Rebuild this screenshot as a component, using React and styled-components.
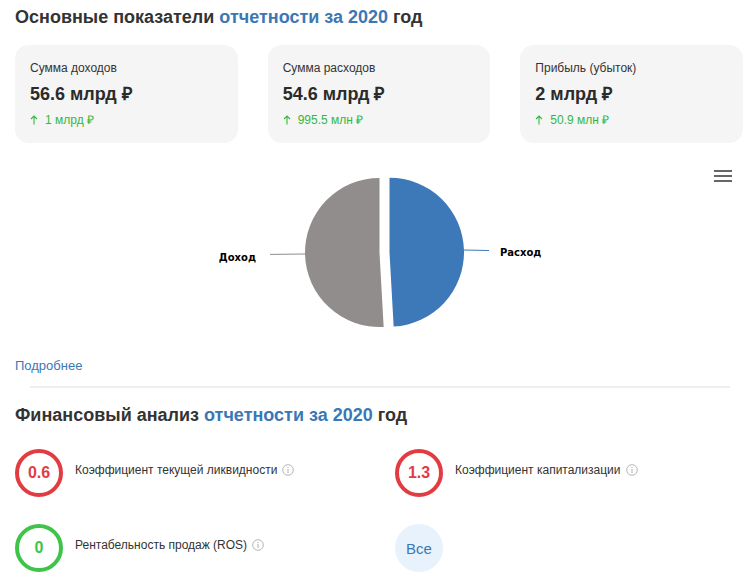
import React from "react";
import styled, { createGlobalStyle } from "styled-components";

const Global = createGlobalStyle`
  html, body { margin: 0; padding: 0; background: #fff; }
  body { font-family: "Liberation Sans", Arial, sans-serif; color: #333; }
`;

const Page = styled.div`
  padding: 6px 13px 0 15px;
  width: 728px;
`;

const Title = styled.h2`
  margin: ${(p) => p.$mt || 0}px 0 0;
  font-size: 18px;
  line-height: 22px;
  font-weight: 700;
  color: #333;
`;

const Accent = styled.span`
  color: #3a78b5;
`;

const Cards = styled.div`
  margin-top: 17px;
  display: grid;
  grid-template-columns: repeat(3, 1fr);
  column-gap: 30px;
`;

const Card = styled.div`
  background: #f5f5f5;
  border-radius: 14px;
  height: 98px;
  box-sizing: border-box;
  padding: 16px 15px 0;
  display: flex;
  flex-direction: column;
  gap: 7px;
`;

const CardLabel = styled.div`
  font-size: 12px;
  line-height: 14px;
  color: #333;
`;

const CardValue = styled.div`
  font-size: 18px;
  line-height: 24px;
  font-weight: 700;
  color: #2b2b2b;
`;

const CardChange = styled.div`
  font-size: 12px;
  line-height: 14px;
  color: #33b83f;
  display: flex;
  align-items: center;
  gap: 7px;
`;

const ChartBox = styled.div`
  position: relative;
  margin-top: 10px;
  height: 193px;
`;

const MenuButton = styled.button`
  position: absolute;
  top: 12px;
  right: 8px;
  width: 24px;
  height: 22px;
  padding: 0;
  border: 0;
  background: transparent;
  display: flex;
  align-items: center;
  justify-content: center;
  cursor: pointer;
`;

const MoreLink = styled.a`
  display: block;
  margin-top: 12px;
  font-size: 13px;
  line-height: 16px;
  color: #3a78b5;
  text-decoration: none;
`;

const Divider = styled.hr`
  margin: 12px 13px 0 15px;
  border: 0;
  height: 2px;
  background: #efefef;
`;

const Metrics = styled.div`
  margin-top: 23px;
  display: grid;
  grid-template-columns: 380px 1fr;
  row-gap: 27px;
`;

const Metric = styled.div`
  display: flex;
  align-items: center;
  gap: 12px;
`;

const Ring = styled.div`
  width: 48px;
  height: 48px;
  box-sizing: border-box;
  border-radius: 50%;
  border: 4px solid ${(p) => p.$color};
  color: ${(p) => p.$color};
  display: flex;
  align-items: center;
  justify-content: center;
  font-size: 16px;
  font-weight: 700;
  flex-shrink: 0;
`;

const AllButton = styled.button`
  width: 48px;
  height: 48px;
  border-radius: 50%;
  border: 0;
  padding: 0;
  background: #e7f2fc;
  color: #3a78b5;
  font-family: "Liberation Sans", Arial, sans-serif;
  font-size: 15px;
  cursor: pointer;
`;

const MetricLabel = styled.div`
  font-size: 12px;
  line-height: 14px;
  color: #333;
  display: flex;
  align-items: center;
  gap: 5px;
  margin-bottom: 7px;
`;

const InfoIcon = () => (
  <svg width="12" height="12" viewBox="0 0 12 12">
    <circle cx="6" cy="6" r="5.3" fill="none" stroke="#b5b5b5" strokeWidth="1" />
    <rect x="5.45" y="5" width="1.1" height="4" fill="#b5b5b5" />
    <rect x="5.45" y="3" width="1.1" height="1.1" fill="#b5b5b5" />
  </svg>
);

const Arrow = () => (
  <svg width="8" height="10" viewBox="0 0 8 10">
    <path d="M4 9.5V1M1 4l3-3 3 3" fill="none" stroke="#33b83f" strokeWidth="1.1" />
  </svg>
);

const cards = [
  { label: "Сумма доходов", value: "56.6 млрд ₽", change: "1 млрд ₽" },
  { label: "Сумма расходов", value: "54.6 млрд ₽", change: "995.5 млн ₽" },
  { label: "Прибыль (убыток)", value: "2 млрд ₽", change: "50.9 млн ₽" },
];

function Pie() {
  const r = 74.5;
  const cx = 364.5;
  const cy = 99.5;
  const end = (86.8 * Math.PI) / 180;
  const ex = r * Math.cos(end);
  const ey = r * Math.sin(end);
  const bx = cx + 10;
  const by = cy - 0.3;
  const grey = `M${cx},${cy} L${cx + ex},${cy + ey} A${r},${r} 0 1 1 ${cx},${cy - r} Z`;
  const blue = `M${bx},${by} L${bx},${by - r} A${r},${r} 0 0 1 ${bx + ex},${by + ey} Z`;
  return (
    <svg width="728" height="193" viewBox="0 0 728 193">
      <path d={grey} fill="#908d8c" />
      <path d={blue} fill="#3d79b8" />
      <path d="M255 101.4 L290 101" stroke="#908d8c" strokeWidth="1" fill="none" />
      <path d="M449 97 L474 97.5" stroke="#3d79b8" strokeWidth="1" fill="none" />
      <text x="241" y="108" textAnchor="end" fontFamily="DejaVu Sans, Verdana, sans-serif" fontSize="10" fontWeight="700" fill="#000">Доход</text>
      <text x="485" y="103" fontFamily="DejaVu Sans, Verdana, sans-serif" fontSize="10" fontWeight="700" fill="#000">Расход</text>
    </svg>
  );
}

export default function App() {
  return (
    <>
      <Global />
      <Page>
        <Title>
          Основные показатели <Accent>отчетности за 2020</Accent> год
        </Title>
        <Cards>
          {cards.map((c) => (
            <Card key={c.label}>
              <CardLabel>{c.label}</CardLabel>
              <CardValue>{c.value}</CardValue>
              <CardChange>
                <Arrow />
                {c.change}
              </CardChange>
            </Card>
          ))}
        </Cards>
        <ChartBox>
          <Pie />
          <MenuButton aria-label="menu">
            <svg width="18" height="14" viewBox="0 0 18 14">
              <path d="M0 2h18M0 7h18M0 12h18" stroke="#666" strokeWidth="2.2" />
            </svg>
          </MenuButton>
        </ChartBox>
        <MoreLink href="#">Подробнее</MoreLink>
        <Divider />
        <Title $mt={16}>
          Финансовый анализ <Accent>отчетности за 2020</Accent> год
        </Title>
        <Metrics>
          <Metric>
            <Ring $color="#e23c42">0.6</Ring>
            <MetricLabel>
              Коэффициент текущей ликвидности <InfoIcon />
            </MetricLabel>
          </Metric>
          <Metric>
            <Ring $color="#e23c42">1.3</Ring>
            <MetricLabel>
              Коэффициент капитализации <InfoIcon />
            </MetricLabel>
          </Metric>
          <Metric>
            <Ring $color="#3fc44a">0</Ring>
            <MetricLabel>
              Рентабельность продаж (ROS) <InfoIcon />
            </MetricLabel>
          </Metric>
          <Metric>
            <AllButton>Все</AllButton>
          </Metric>
        </Metrics>
      </Page>
    </>
  );
}
